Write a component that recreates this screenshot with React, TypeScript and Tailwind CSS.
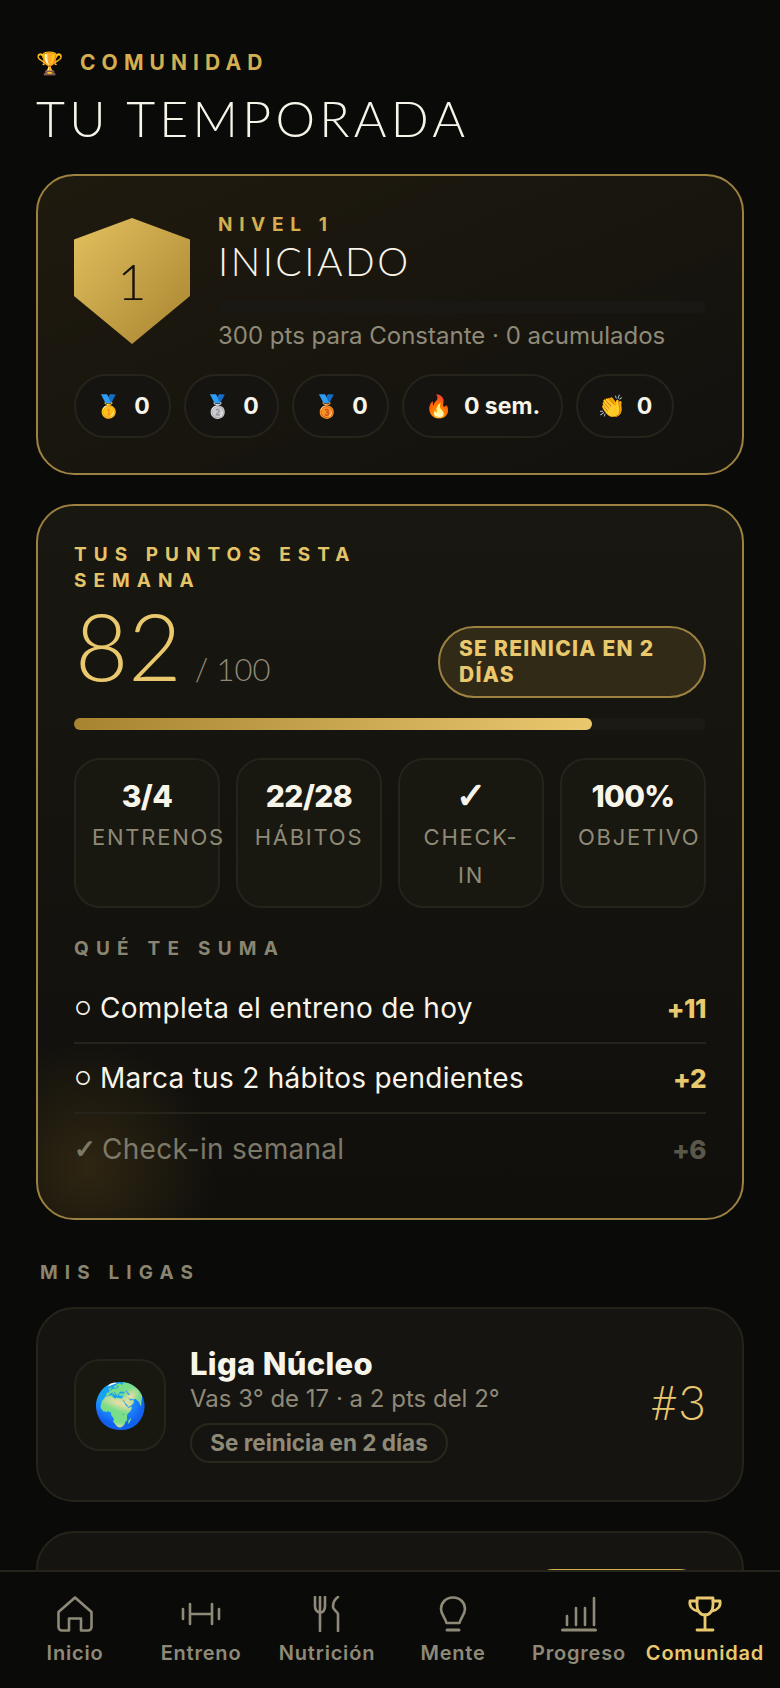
const sans = "font-['Inter','Noto_Sans',sans-serif]";

const medals = [
  { icon: "🥇", text: "0", w: "w-[97px]" },
  { icon: "🥈", text: "0", w: "w-[95px]" },
  { icon: "🥉", text: "0", w: "w-[97px]" },
  { icon: "🔥", text: "0 sem.", w: "w-[161px]" },
  { icon: "👏", text: "0", w: "w-[98px]" },
];

const stats = [
  { value: "3/4", label: "ENTRENOS" },
  { value: "22/28", label: "HÁBITOS" },
  { value: "✓", label: "CHECK-IN" },
  { value: "100%", label: "OBJETIVO" },
];

const tasks = [
  { mark: "○", text: "Completa el entreno de hoy", pts: "+11", done: false },
  { mark: "○", text: "Marca tus 2 hábitos pendientes", pts: "+2", done: false },
  { mark: "✓", text: "Check-in semanal", pts: "+6", done: true },
];

const HomeIcon = () => (
  <svg viewBox="0 0 36 36" className="h-[36px] w-[36px]" fill="none" stroke="currentColor" strokeWidth="2.6" strokeLinecap="round" strokeLinejoin="round">
    <path d="M1.5 16 18 1.5 34.500 16V31a3.500 3.500 0 0 1-3.500 3.500H24V22.500H12V34.500H5A3.500 3.500 0 0 1 1.500 31Z" />
  </svg>
);

const DumbbellIcon = () => (
  <svg viewBox="0 0 40 36" className="h-[36px] w-[40px]" fill="none" stroke="currentColor" strokeWidth="2.6" strokeLinecap="round">
    <path d="M2 13v10M9 8v20M31 8v20M38 13v10M9 18h22" />
  </svg>
);

const ForkIcon = () => (
  <svg viewBox="0 0 30 36" className="h-[36px] w-[30px]" fill="none" stroke="currentColor" strokeWidth="2.600" strokeLinecap="round" strokeLinejoin="round">
    <path d="M3 1v9c0 4 2 6 5 6.500S13 14 13 10V1M8 1v34M26 1c-3 2-5 6-5 10 0 3 5 5 5 7v17" />
  </svg>
);

const BulbIcon = () => (
  <svg viewBox="0 0 30 36" className="h-[36px] w-[30px]" fill="none" stroke="currentColor" strokeWidth="2.600" strokeLinecap="round" strokeLinejoin="round">
    <path d="M15 1.500C7.500 1.500 3 7 3 13c0 5 4 8 5.500 14h13C23 21 27 18 27 13c0-6-4.500-11.500-12-11.500Z" />
    <path d="M9 34h12" strokeWidth="3" />
  </svg>
);

const BarsIcon = () => (
  <svg viewBox="0 0 36 36" className="h-[36px] w-[36px]" fill="none" stroke="currentColor" strokeWidth="2.600" strokeLinecap="round">
    <path d="M6 20v9M15 12v17M24 12v17M33 2v27" />
    <path d="M1.500 34h33" strokeWidth="3" />
  </svg>
);

const TrophyIcon = () => (
  <svg viewBox="0 0 36 36" className="h-[36px] w-[36px]" fill="none" stroke="currentColor" strokeWidth="2.800" strokeLinecap="round" strokeLinejoin="round">
    <path d="M10 2h16v7c0 6-3.500 10-8 10s-8-4-8-10Z" />
    <path d="M10 5H3c-1 5 2 9 8 10M26 5h7c1 5-2 9-8 10M18 19v14M10 34h16" />
  </svg>
);

const navItems = [
  { label: "Inicio", icon: <HomeIcon />, active: false },
  { label: "Entreno", icon: <DumbbellIcon />, active: false },
  { label: "Nutrición", icon: <ForkIcon />, active: false },
  { label: "Mente", icon: <BulbIcon />, active: false },
  { label: "Progreso", icon: <BarsIcon />, active: false },
  { label: "Comunidad", icon: <TrophyIcon />, active: true },
];

const App = () => {
  return (
    <div className={`flex h-[1688px] w-[780px] flex-col overflow-hidden bg-[#0a0a09] ${sans}`}>
      <main className="min-h-0 flex-1 overflow-hidden px-[36px] pt-[46px]">
        {/* Header */}
        <div className="flex h-[32px] items-center gap-[10px] pt-[2px]">
          <span className="w-[34px] text-[22px] leading-none">🏆</span>
          <span className="text-[21px] font-bold tracking-[0.29em] text-[#d4af4f]">COMUNIDAD</span>
        </div>
        <h1 className="mt-[10px] h-[60px] font-['Lato',sans-serif] text-[50px] leading-[60px] font-light tracking-[0.085em] text-[#f7f4ea]">TU TEMPORADA</h1>

        {/* Level card */}
        <section className="mt-[26px] h-[301px] rounded-[38px] border-2 border-[#9c8140] bg-gradient-to-br from-[#1f1a0e] to-[#12110e] px-[36px] pt-[42px]">
          <div className="flex gap-[28px]">
            <div className="flex h-[126px] w-[116px] shrink-0 items-center justify-center bg-gradient-to-br from-[#e3c15f] to-[#a8842f] [clip-path:polygon(50%_0,100%_17%,100%_62%,50%_100%,0_62%,0_17%)]">
              <span className="font-['Lato',sans-serif] text-[50px] font-light text-[#14100a]">1</span>
            </div>
            <div className="min-w-0 flex-1">
              <div className="text-[19px] leading-[14px] font-bold tracking-[0.35em] text-[#d4af4f]">NIVEL 1</div>
              <div className="mt-[6px] font-['Lato',sans-serif] text-[39px] leading-[46px] font-light tracking-[0.065em] text-[#f7f4ea]">INICIADO</div>
              <div className="mt-[17px] h-[12px] rounded-full bg-[#191814]" />
              <div className="mt-[7px] text-[24px] leading-[32px] whitespace-nowrap text-[#8f8a78]">300 pts para Constante · 0 acumulados</div>
            </div>
          </div>
          <div className="mt-[22px] flex gap-[13px]">
            {medals.map((m) => (
              <div key={m.icon} className={`flex h-[64px] items-center justify-center gap-[12px] rounded-full border-2 border-[#26231a] bg-[#151410] ${m.w}`}>
                <span className="text-[22px] leading-none">{m.icon}</span>
                <span className="text-[23px] font-bold text-[#f7f4ea]">{m.text}</span>
              </div>
            ))}
          </div>
        </section>

        {/* Weekly points */}
        <section className="relative mt-[29px] h-[716px] overflow-hidden rounded-[38px] border-2 border-[#9c8140] bg-gradient-to-b from-[#181710] to-[#100f0c] px-[36px] pt-[36px]">
          <div className="pointer-events-none absolute -bottom-[80px] -left-[80px] h-[260px] w-[260px] rounded-full bg-[radial-gradient(circle,rgba(140,108,35,0.24),rgba(140,108,35,0)_70%)]" />
          <div className="relative">
            <div className="w-[340px] text-[19px] leading-[26px] font-bold tracking-[0.37em] text-[#e4c468]">TUS PUNTOS ESTA SEMANA</div>
            <div className="mt-[-6px] flex h-[108px] items-end justify-between">
              <div className="flex items-baseline gap-[13px] pl-[1px]">
                <span className="font-['Lato',sans-serif] text-[92px] leading-[100px] font-light text-[#e9c86e]">82</span>
                <span className="font-['Lato',sans-serif] text-[31px] font-light text-[#8f8a78]">/ 100</span>
              </div>
              <div className="mb-[-2px] flex h-[72px] w-[268px] items-center rounded-full border-2 border-[#9c8140] bg-[#312a17] pl-[19px] pr-[16px] text-[21px] leading-[26px] font-extrabold tracking-[0.06em] text-[#e9c86e]">SE REINICIA EN 2 DÍAS</div>
            </div>
            <div className="mt-[22px] h-[12px] rounded-full bg-[#1b1a15]">
              <div className="h-full w-[82%] rounded-full bg-gradient-to-r from-[#a68430] to-[#e9c86e]" />
            </div>

            <div className="mt-[28px] grid grid-cols-4 gap-[16px]">
              {stats.map((s) => (
                <div key={s.label} className="flex h-[150px] flex-col items-center rounded-[26px] border-2 border-[#26241a] bg-[#181710] px-[16px] pt-[16px]">
                  {s.value === "✓" ? (
                    <div className="font-['DejaVu_Sans',sans-serif] text-[36px] leading-[40px] font-bold text-[#f7f4ea] [-webkit-text-stroke:1.2px_#f7f4ea]">{s.value}</div>
                  ) : (
                    <div className="text-[30px] leading-[40px] font-extrabold tracking-[-0.02em] text-[#f7f4ea]">{s.value}</div>
                  )}
                  <div className="mt-[2px] w-full text-center text-[22px] leading-[38px] tracking-[0.08em] text-[#8f8a78]">{s.label}</div>
                </div>
              ))}
            </div>

            <div className="mt-[28px] text-[19px] leading-[26px] font-bold tracking-[0.38em] text-[#8a8570]">QUÉ TE SUMA</div>
            <div className="mt-[12px]">
              {tasks.map((t, i) => (
                <div key={t.text} className={`flex h-[70px] items-center justify-between ${i < tasks.length - 1 ? "border-b-2 border-[#26241a]" : ""} ${t.done ? "text-[#7d7968]" : "text-[#f7f4ea]"}`}>
                  <div className="flex items-center gap-[8px] text-[28px] tracking-[0.01em]">
                    {t.done ? (
                      <span className="w-[20px] text-center font-['DejaVu_Sans',sans-serif] text-[26px] font-bold [-webkit-text-stroke:1px_#7d7968]">{t.mark}</span>
                    ) : (
                      <span className="w-[18px] text-center text-[18px]">{t.mark}</span>
                    )}
                    <span>{t.text}</span>
                  </div>
                  <span className={`text-[26px] font-extrabold tracking-[-0.02em] ${t.done ? "text-[#5a5749]" : "text-[#e9c86e]"}`}>{t.pts}</span>
                </div>
              ))}
            </div>
          </div>
        </section>

        {/* Leagues */}
        <div className="mt-[40px] pl-[4px] text-[19px] leading-[26px] font-bold tracking-[0.375em] text-[#8a8570]">MIS LIGAS</div>
        <section className="mt-[21px] flex h-[195px] items-center rounded-[38px] border-2 border-[#26241a] bg-[#151410] pl-[36px] pr-[36px]">
          <div className="flex h-[92px] w-[92px] shrink-0 items-center justify-center rounded-[26px] border-2 border-[#26241a] bg-[#181710]">
            <span className="text-[44px] leading-none">🌍</span>
          </div>
          <div className="ml-[24px] min-w-0 flex-1">
            <div className="text-[31px] leading-[36px] font-extrabold tracking-[0.01em] text-[#f7f4ea]">Liga Núcleo</div>
            <div className="text-[24px] leading-[34px] text-[#8f8a78]">Vas 3° de 17 · a 2 pts del 2°</div>
            <div className="mt-[7px] flex h-[40px] w-[258px] items-center justify-center rounded-full border-2 border-[#2a271c] text-[22.500px] font-bold text-[#8f8a78]">Se reinicia en 2 días</div>
          </div>
          <div className="mb-[6px] font-['Lato',sans-serif] text-[48px] font-light text-[#e9c86e]">#3</div>
        </section>
        <section className="mt-[29px] flex h-[195px] items-start justify-end rounded-[38px] border-2 border-[#26241a] bg-[#151410] pt-[36px] pr-[42px]">
          <div className="h-[40px] w-[167px] rounded-full bg-[#d4af4f]" />
        </section>
      </main>

      {/* Bottom nav */}
      <nav className="grid h-[118px] shrink-0 grid-cols-6 border-t-2 border-[#26241a] bg-[#0a0a09] px-[12px] pt-[24px]">
        {navItems.map((n) => (
          <div key={n.label} className={`flex flex-col items-center ${n.active ? "text-[#e9c86e]" : "text-[#8f8a78]"}`}>
            {n.icon}
            <span className="mt-[8px] text-[20px] leading-[26px] font-semibold tracking-[0.04em] whitespace-nowrap">{n.label}</span>
          </div>
        ))}
      </nav>
    </div>
  );
};

export default App;
